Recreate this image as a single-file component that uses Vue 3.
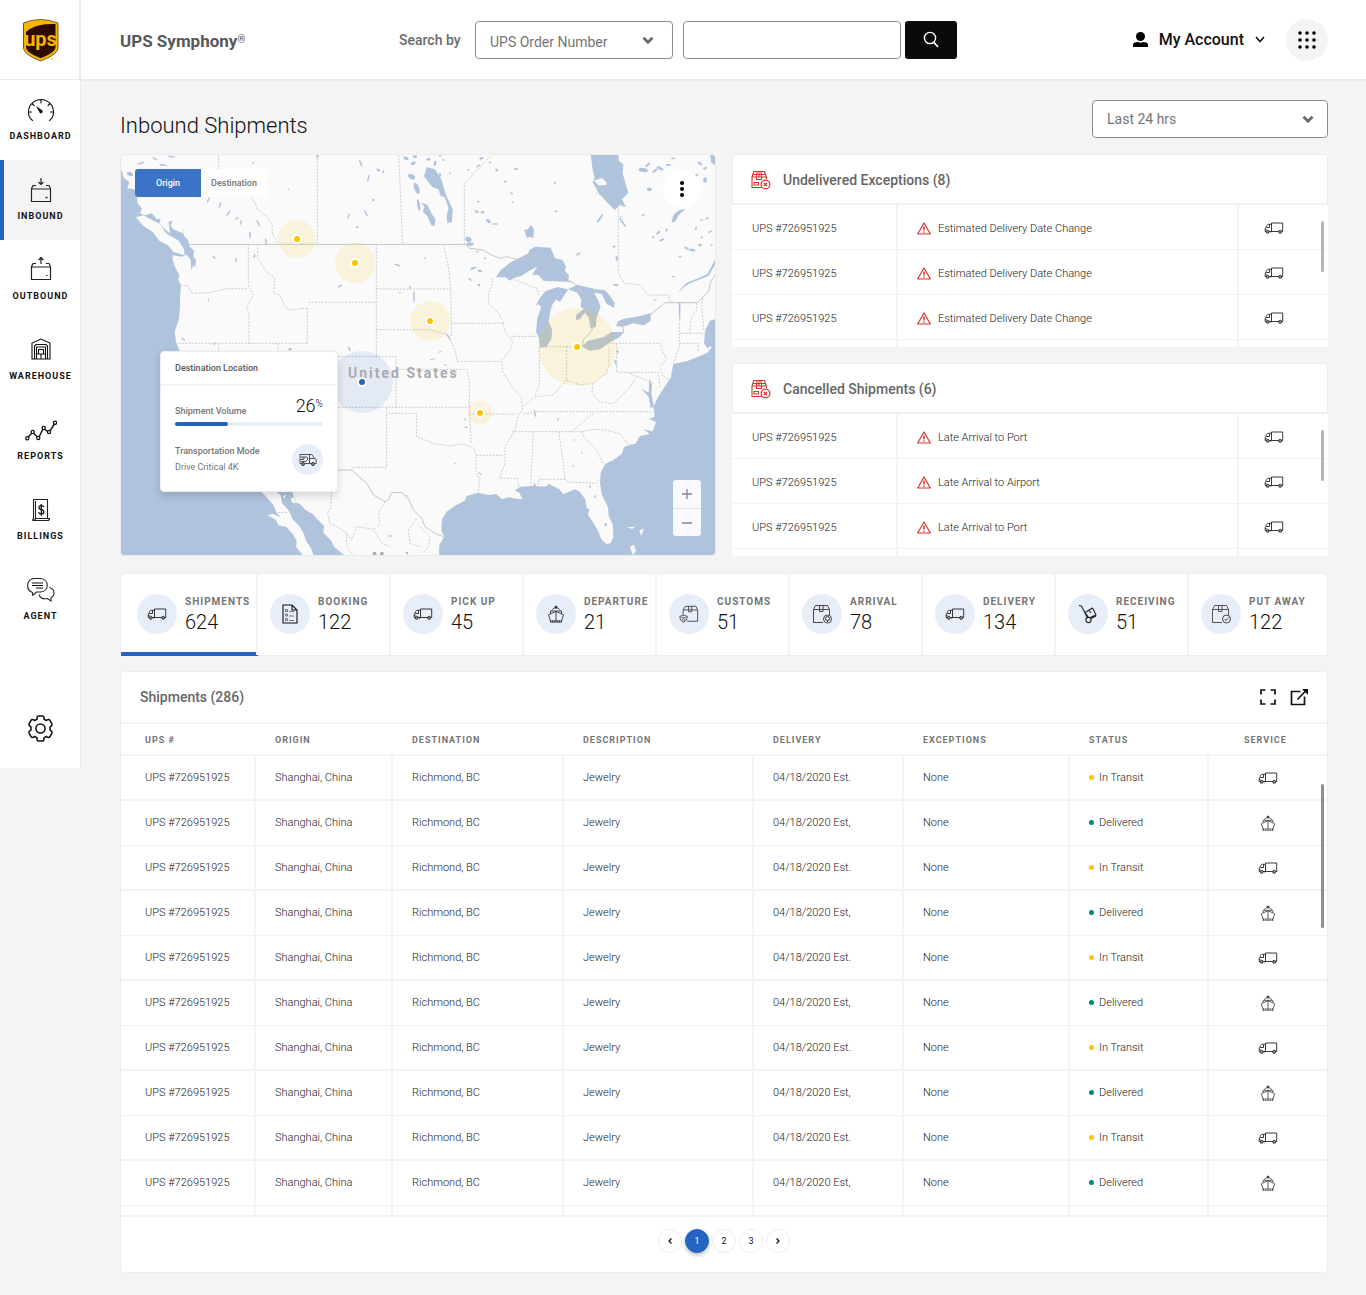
<script setup>
import { ref } from 'vue'

const nav = [
  { label: 'Dashboard', icon: 'gauge' },
  { label: 'Inbound', icon: 'inbound', active: true },
  { label: 'Outbound', icon: 'outbound' },
  { label: 'Warehouse', icon: 'warehouse' },
  { label: 'Reports', icon: 'reports' },
  { label: 'Billings', icon: 'billing' },
  { label: 'Agent', icon: 'agent' },
]

const alerts = [
  {
    title: 'Undelivered Exceptions (8)',
    rows: ['Estimated Delivery Date Change', 'Estimated Delivery Date Change', 'Estimated Delivery Date Change'],
  },
  {
    title: 'Cancelled Shipments (6)',
    rows: ['Late Arrival to Port', 'Late Arrival to Airport', 'Late Arrival to Port'],
  },
]

const stats = [
  { label: 'Shipments', value: 624, icon: 'truck', active: true },
  { label: 'Booking', value: 122, icon: 'doc' },
  { label: 'Pick up', value: 45, icon: 'truck' },
  { label: 'Departure', value: 21, icon: 'ship' },
  { label: 'Customs', value: 51, icon: 'customs' },
  { label: 'Arrival', value: 78, icon: 'arrival' },
  { label: 'Delivery', value: 134, icon: 'truck' },
  { label: 'Receiving', value: 51, icon: 'dolly' },
  { label: 'Put Away', value: 122, icon: 'putaway' },
]

const columns = ['UPS #', 'Origin', 'Destination', 'Description', 'Delivery', 'Exceptions', 'Status', 'Service']
const shipments = Array.from({ length: 10 }, (_, i) => ({
  id: 'UPS #726951925',
  transit: i % 2 === 0,
  date: i % 2 === 0 ? '04/18/2020 Est.' : '04/18/2020 Est,',
}))

const page = ref(1)
const searchBy = ref('order')
const period = ref('24')
const query = ref('')

// x, y, rx, ry, rotation
const ponds = [
  [30, 72, 12, 7, 20], [75, 115, 18, 4, 35], [62, 40, 14, 3, -20], [130, 45, 16, 3, 5], [105, 26, 10, 3, 30], [155, 20, 14, 3, 10],
  [240, 135, 3, 12, 30], [265, 150, 3, 12, 25], [300, 165, 3, 12, 20], [325, 190, 3, 14, 35], [350, 205, 8, 3, -30],
  [362, 218, 3, 9, 10], [390, 255, 3, 14, 0], [415, 220, 3, 14, -30], [438, 275, 3, 14, -10], [348, 330, 3, 9, 0],
  [403, 318, 3, 8, 10], [282, 322, 8, 3, 50], [265, 450, 2, 6, 0], [190, 568, 9, 3, 30], [510, 598, 6, 5, 0], [283, 582, 2, 7, 0],
  [400, 38, 6, 2, -30], [505, 118, 3, 3, 0], [592, 19, 5, 5, 0], [722, 40, 3, 14, -20], [745, 85, 3, 14, 10], [760, 150, 5, 5, 0],
  [738, 190, 3, 14, -30], [712, 232, 5, 4, 0], [686, 198, 3, 10, 20], [775, 60, 8, 4, 30], [790, 65, 3, 6, 0], [832, 345, 12, 3, 20],
  [660, 408, 10, 3, -25], [840, 428, 7, 2, 0], [882, 440, 3, 20, 0], [870, 412, 3, 6, 20], [688, 597, 3, 10, -20],
  [858, 25, 10, 6, 20], [880, 40, 9, 6, -20], [885, 20, 8, 5, 0], [875, 80, 14, 9, 30], [890, 115, 9, 22, -20], [896, 165, 5, 22, -10],
  [925, 28, 8, 5, 0], [945, 40, 5, 10, 20], [960, 75, 4, 8, 0], [990, 70, 4, 3, 0], [970, 30, 6, 3, 0],
  [1085, 25, 9, 4, -20], [1075, 48, 9, 3, -30], [1110, 38, 5, 3, 0], [1130, 60, 7, 4, 40], [1188, 57, 8, 4, 0], [1155, 95, 7, 3, -40],
  [1175, 130, 6, 3, 30], [1070, 185, 9, 4, 30], [1088, 187, 6, 5, 0], [1105, 213, 10, 6, 40], [1125, 222, 12, 3, 0], [1075, 155, 5, 3, 0],
  [1178, 156, 4, 3, 0], [1305, 98, 3, 5, 0], [1308, 184, 6, 3, 20], [1440, 205, 4, 20, 35], [1502, 205, 3, 8, 10], [1510, 220, 3, 18, -35],
  [1045, 268, 12, 9, 30], [1050, 282, 14, 7, 0], [1060, 355, 12, 4, -20], [1080, 363, 9, 4, 10], [1050, 388, 8, 3, 30], [1077, 405, 5, 5, 0],
  [1072, 305, 5, 3, 0], [1095, 325, 5, 3, 0], [1375, 312, 10, 3, -30], [1482, 290, 6, 4, 0], [1490, 325, 4, 10, 0], [1488, 405, 10, 4, 10],
  [1570, 60, 18, 8, 10], [1583, 45, 12, 4, -40], [1620, 55, 14, 5, 25], [1605, 62, 12, 4, -40], [1645, 45, 10, 4, 0], [1588, 118, 9, 7, 0],
  [1660, 25, 9, 3, 0], [1740, 40, 9, 5, 30], [1755, 55, 8, 4, -30], [1755, 90, 7, 10, 20], [1730, 75, 6, 4, 0], [1762, 205, 8, 3, -20],
  [1745, 210, 6, 3, 0], [1570, 195, 4, 5, 0], [1615, 248, 10, 4, -40], [1625, 270, 10, 4, -20], [1600, 262, 6, 3, 40], [1640, 240, 4, 7, 10],
  [1728, 235, 3, 7, 10], [1700, 295, 10, 4, 30], [1717, 300, 12, 5, 10], [1740, 285, 8, 4, -30], [1745, 262, 5, 3, 0], [1775, 285, 5, 3, 0],
  [1680, 320, 6, 3, 0], [1770, 245, 8, 3, -20], [1660, 380, 5, 3, 0], [1605, 450, 5, 2, 20], [1045, 60, 6, 3, 0], [960, 18, 6, 3, 0],
  [985, 560, 3, 16, -35], [915, 325, 4, 3, 0], [960, 605, 8, 2, -20], [938, 628, 12, 2, -15], [975, 645, 7, 2, 20],
  [1245, 790, 3, 14, -10], [1314, 808, 3, 6, 0], [1038, 832, 6, 3, 0], [1035, 808, 3, 4, 0], [1363, 870, 3, 3, 0], [1385, 908, 3, 3, 0],
  [1005, 940, 2, 5, 0], [1360, 948, 2, 6, 20], [1080, 970, 2, 9, -40], [1410, 1010, 3, 6, 0], [1425, 1040, 3, 6, 0], [1457, 1124, 5, 6, 0],
  [1487, 638, 3, 14, -20], [1493, 605, 3, 8, 0], [810, 1158, 8, 3, 0], [860, 1037, 4, 2, 0],
]

const pins = [
  { x: 176, y: 84, r: 19 },
  { x: 234, y: 108, r: 20 },
  { x: 309, y: 166, r: 20 },
  { x: 456, y: 192, r: 39 },
  { x: 359, y: 258, r: 12 },
]
</script>

<template>
  <svg class="sprite" aria-hidden="true">
    <symbol id="gauge" viewBox="0 -1 30 26">
      <path d="M6.500 22.500C3.500 20.500 2.500 17 2.500 14A12.500 12.500 0 0 1 27.500 14C27.500 17 26.500 20.500 23.500 22.500M15 2V5M6 5.500L8 7.500M24 5.500L22 7.500M2.500 14H5.500M24.500 14H27.500" fill="none" stroke="#111" stroke-width="1.100" stroke-linecap="round" />
      <path d="M10 8L16.500 12.500A2 2 0 0 1 14 15.200Z" fill="#111" />
    </symbol>
    <symbol id="inbound" viewBox="0 0 22 26">
      <path d="M1.500 12V24.500H20.500V12ZM1.500 11.500L3 8.500H6M20.500 11.500L19 8.500H16M11 1V7M8.500 5L11 7.500L13.500 5" fill="none" stroke="#222" stroke-width="1.200" />
      <path d="M15.500 20.500H17.500" stroke="#222" stroke-width="1.500" />
    </symbol>
    <symbol id="outbound" viewBox="0 2 22 26">
      <path d="M1.500 12V24.500H20.500V12ZM1.500 11.500L3 8.500H6M20.500 11.500L19 8.500H16M11 9V3M8.500 5L11 2.500L13.500 5" fill="none" stroke="#222" stroke-width="1.200" />
      <path d="M16 20.500H17.500" stroke="#222" stroke-width="1.200" />
    </symbol>
    <symbol id="warehouse" viewBox="-6 -1 32 26">
      <path d="M1 21V5L10 1L19 5V21ZM3.500 21V8L5 6.500H15L16.500 8V21M5.500 21V9H14.500V21M7.500 16V11.500H12.500V16M5.500 21V16H14.500M10 16V21" fill="none" stroke="#111" stroke-width="1.100" />
    </symbol>
    <symbol id="reports" viewBox="0 -3 32 26">
      <path d="M3.300 17L6.700 13.300M8.800 13.400L12.200 16.800M14.200 16.700L17.800 9.300M20 9.500L23 11.600M25 10.800L29.400 4" fill="none" stroke="#111" stroke-width="1.400" />
      <g fill="none" stroke="#111" stroke-width="1.300">
        <circle cx="2.300" cy="18.300" r="1.600" /><circle cx="7.700" cy="12" r="1.600" /><circle cx="13.300" cy="18" r="1.600" />
        <circle cx="18.700" cy="8" r="1.600" /><circle cx="24" cy="12" r="1.600" /><circle cx="30" cy="2.700" r="1.600" />
      </g>
    </symbol>
    <symbol id="billing" viewBox="-6 -1 32 26">
      <path d="M2.500 20V1.500H16.500V20M4.500 3V20M1.500 22.500C3.500 22.500 4.500 21.500 4.500 20.500H18.500C18.500 22 17.500 22.500 16.500 22.500ZM1.500 22.500L2.500 20" fill="none" stroke="#222" stroke-width="1.100" />
      <path d="M13 9C12.500 7.800 11.500 7.600 10.300 7.600C7 7.600 7.200 11.300 10.300 11.700C13.700 12.200 13.500 16 10.300 16C8.800 16 7.800 15.300 7.500 14.200M10.300 6V17.700" fill="none" stroke="#111" stroke-width="1.300" />
    </symbol>
    <symbol id="agent" viewBox="0 0 30 26">
      <path d="M6.500 18.500V15.500C-.5 13 0 2 8.500 1.500H14.500C23.500 2 23.500 14.500 14.500 15H10.500L6.500 18.500M23.500 10.500C29.500 12.500 29 18.500 25 20.500V24L21.500 21.500C17 22.500 14 20.500 13 17.500" fill="none" stroke="#222" stroke-width="1.100" />
      <path d="M6 6H17M6 8.500H17M10 11H17" stroke="#111" stroke-width="1.100" />
    </symbol>
    <symbol id="gear" viewBox="0 0 26 26">
      <path d="M9.700 4V2.500Q9.700 1 11 1H15Q16.300 1 16.300 2.500V4L18.500 5.300L20 4.500Q21.300 4 22 5L24 8.500Q24.600 9.800 23.500 10.500L22.200 11.500V14.500L23.500 15.500Q24.600 16.200 24 17.500L22 21Q21.300 22 20 21.500L18.500 20.700L16.300 22V23.500Q16.300 25 15 25H11Q9.700 25 9.700 23.500V22L7.500 20.700L6 21.500Q4.700 22 4 21L2 17.500Q1.400 16.200 2.500 15.500L3.800 14.500V11.500L2.500 10.500Q1.400 9.800 2 8.500L4 5Q4.700 4 6 4.500L7.500 5.300Z" fill="none" stroke="#111" stroke-width="1.500" />
      <circle cx="13" cy="13" r="4.400" fill="none" stroke="#111" stroke-width="1.500" />
    </symbol>
    <symbol id="truck" viewBox="0 0 20 12">
      <path d="M7.500 1H18.700V9.500H7.500ZM7.500 2.300H4.300C2.800 2.500 2.300 4 2 5.500L1.200 6.200V9.500H7.500M5.500 2.500V5.500H2.200M1.300 7.500H2.500" fill="none" stroke="#222" stroke-width=".9" />
      <circle cx="3.700" cy="9.800" r="1.500" fill="#999" stroke="#222" stroke-width=".9" /><circle cx="16.200" cy="9.800" r="1.500" fill="#999" stroke="#222" stroke-width=".9" /><circle cx="6.800" cy="9.800" r=".8" fill="#222" />
    </symbol>
    <symbol id="ambulance" viewBox="0 0 18 13">
      <path d="M10.500 1.500V10.500M1 1.500H13L15.500 5.500L17.200 6.500V10.500H1ZM10.500 5.500H15.500M2 4H8L9 6L7 8M1 6.500H5M3 5H6M2 8.500H7" fill="none" stroke="#444" stroke-width=".9" />
      <circle cx="4" cy="11" r="1.500" fill="#999" stroke="#333" /><circle cx="14" cy="11" r="1.500" fill="#999" stroke="#333" />
    </symbol>
    <symbol id="ship" viewBox="0 0 18 20">
      <path d="M3.500 17L1.500 11L3.500 9.800V7H14.500V9.800L16.500 11L14.500 17M5 6.500C5.500 4.800 6.500 4.300 7.500 4.200H10.500C11.500 4.300 12.500 4.800 13 6.500M9 1.500V4M3.500 9.800L9 7.500L14.500 9.800M9 7.500V17" fill="none" stroke="#333" stroke-width=".9" />
      <path d="M3 16.800H15M3 18.200H15" stroke="#333" stroke-width="1.200" stroke-dasharray="1.500 .6" /><path d="M7.500 2.300H10.500V4H7.500Z" fill="#333" />
    </symbol>
    <symbol id="doc" viewBox="0 0 16 20">
      <path d="M1 1H10L15 6V19H1ZM10 1V6H15" fill="none" stroke="#111" stroke-width="1.100" />
      <path d="M3.500 5.500H5.500V7.500H3.500ZM3.500 10H5.500V12H3.500ZM3.500 14.500H5.500V16.500H3.500ZM7 7.500H12M7 12H12M7 16.500H12" fill="none" stroke="#555" stroke-width=".8" />
    </symbol>
    <symbol id="customs" viewBox="0 0 22 20">
      <path d="M4.500 11V5.500H20.500V18H9M4.500 5.500L7 1.500H18.500L20.500 5.500M10.500 1.500V7.500H14V1.500" fill="none" stroke="#444" stroke-width="1" />
      <path d="M1 12.500L5 11.500L9 12.500C9.200 16 7.500 18 5 19C2.500 18 .8 16 1 12.500ZM2.500 14.200H7.500M3.500 16.500H7" fill="#e7eef9" stroke="#444" stroke-width="1" />
    </symbol>
    <symbol id="arrival" viewBox="0 0 20 20">
      <path d="M11 18.500H1.500V5.500H17.500V11M1.500 5.500L3.500 1.500H15.500L17.500 5.500M7.500 1.500V7.500H11V1.500" fill="none" stroke="#444" stroke-width="1" />
      <circle cx="15.500" cy="15" r="4" fill="#e7eef9" stroke="#444" /><circle cx="15.500" cy="14.500" r="2" fill="none" stroke="#333" stroke-width="1" /><path d="M15.500 16V18" stroke="#444" />
    </symbol>
    <symbol id="putaway" viewBox="0 0 20 20">
      <path d="M11 18.500H1.500V5.500H17.500V11M1.500 5.500L3.500 1.500H15.500L17.500 5.500M7.500 1.500V7.500H11V1.500" fill="none" stroke="#444" stroke-width=".9" />
      <circle cx="15.500" cy="15" r="4" fill="#e7eef9" stroke="#444" /><path d="M13.500 15L15 16.500L17.500 13.500" fill="none" stroke="#444" />
    </symbol>
    <symbol id="dolly" viewBox="0 0 20 20">
      <path d="M1 1.500L3.500 2L9.500 14M7 8.500L14.500 4L18 11L11 14ZM11 6.500L13 9M12 15L18 12" fill="none" stroke="#222" stroke-width="1.100" stroke-linejoin="round" />
      <circle cx="10.500" cy="16" r="2.600" fill="#e7eef9" stroke="#222" stroke-width="1.100" />
    </symbol>
    <symbol id="badbox" viewBox="0 0 20 20">
      <path d="M10.500 17.500H1V7L2.700 1.500H13.300L15.500 7V9M1 7H15.500M6 1.500L5.500 7V9.500H10.500V7L10 1.500M8 1.500V7M2 4.500H14.500M3 12.500H7.500V15H3Z" fill="none" stroke="#d9332e" stroke-width="1.100" />
      <circle cx="14.500" cy="14.500" r="4.400" fill="#fff" stroke="#d9332e" stroke-width="1.200" /><path d="M13 13L16 16M16 13L13 16" stroke="#d9332e" stroke-width="1.200" />
    </symbol>
    <symbol id="warn" viewBox="0 0 14 13">
      <path d="M7 1L13.300 12H.7Z" fill="none" stroke="#d9332e" stroke-width="1.200" stroke-linejoin="round" />
      <path d="M7 4.500V8.500M7 9.500V10.700" stroke="#d9332e" stroke-width="1.500" />
    </symbol>
  </svg>

  <div class="app">
    <header class="topbar">
      <a class="logo" href="#" aria-label="UPS home">
        <svg width="36" height="43" viewBox="0 0 36 43">
          <path d="M.5 4Q17.500-3 35 4V28C35 33 31 36.500 17.800 42C4 36.500 .5 33 .5 28Z" fill="#f7b600" stroke="#5c3410" stroke-width=".8" />
          <path d="M3 13Q12 4 32.500 5V27.500C32.500 32 28 35 17.800 39.200C7 35 3 32 3 27.500Z" fill="#2d0a00" />
          <text class="logo-text" x="17.500" y="27" text-anchor="middle">ups</text>
          <circle cx="29" cy="40" r="1.200" fill="#fbdc85" />
        </svg>
      </a>
      <div class="brand">UPS Symphony<sup>®</sup></div>
      <form class="search" @submit.prevent>
        <label for="search-by">Search by</label>
        <span class="select-box order-select">
          <select id="search-by" v-model="searchBy"><option value="order">UPS Order Number</option></select>
          <svg class="chev" width="12" height="9" viewBox="0 0 12 9"><path d="M1.500 1.800L6 6.300L10.500 1.800" fill="none" stroke="#6b6b6b" stroke-width="2.800" /></svg>
        </span>
        <input v-model="query" type="text" aria-label="Search term" />
        <button class="go" type="submit" aria-label="Search">
          <svg width="16" height="18" viewBox="0 0 16 18"><circle cx="7" cy="7" r="5.600" fill="none" stroke="#fff" stroke-width="1.400" /><path d="M11 11.500L15 16" stroke="#fff" stroke-width="1.800" /></svg>
        </button>
      </form>
      <button class="account" type="button">
        <svg width="15" height="15" viewBox="0 0 15 15"><circle cx="7.500" cy="4.500" r="4.500" /><path d="M0 15V13Q0 10.500 3 10.300L5 10Q7.500 11.500 10 10L12 10.300Q15 10.500 15 13V15Z" /></svg>
        My Account
        <svg width="10" height="7" viewBox="0 0 10 7"><path d="M1 1L5 5.500L9 1" fill="none" stroke="#111" stroke-width="1.500" /></svg>
      </button>
      <button class="apps" type="button" aria-label="Apps">
        <svg width="18" height="18" viewBox="0 0 18 18"><g v-for="r in 3" :key="r"><circle v-for="c in 3" :key="c" :cx="c * 7 - 5" :cy="r * 7 - 5" r="1.800" /></g></svg>
      </button>
    </header>

    <div class="body">
      <nav class="side">
        <a v-for="n in nav" :key="n.label" href="#" :class="{ active: n.active }">
          <svg width="32" height="26"><use :href="'#' + n.icon" /></svg>
          <span>{{ n.label }}</span>
        </a>
        <a class="settings" href="#" aria-label="Settings"><svg width="27" height="27"><use href="#gear" /></svg></a>
      </nav>

      <main>
        <div class="head">
          <h1>Inbound Shipments</h1>
          <span class="select-box period">
            <select v-model="period" aria-label="Period"><option value="24">Last 24 hrs</option></select>
            <svg class="chev" width="12" height="9" viewBox="0 0 12 9"><path d="M1.500 1.800L6 6.300L10.500 1.800" fill="none" stroke="#6b6b6b" stroke-width="2.800" /></svg>
          </span>
        </div>

        <div class="overview">
          <section class="map" aria-label="Shipment map">
            <svg class="geo" viewBox="0 0 594 400" preserveAspectRatio="xMidYMid slice">
              <g transform="scale(.33333) translate(-3 -15)">
                <g fill="#afc3dd">
                  <path d="M3 55L12 85L28 95L22 115L42 118L52 128V158L66 176L60 190L75 196L95 190L110 208L122 206L118 220L135 238L150 250L148 230L145 215L158 212L152 226L160 238L188 250L186 232L192 258L204 270L208 288L222 302L220 322L228 328L226 352L220 345L214 362L212 330L200 314L186 320L158 316L158 330L165 350L178 375L175 390L183 405L180 440L180 470L176 510L164 545L168 575L178 600L190 700L260 850L360 1000L425 1027L440 1042L460 1065L470 1088L482 1102L458 1092L443 1096L468 1110L475 1126L498 1130L518 1152L530 1172L528 1190L548 1215H3Z" />
                  <path d="M463 1020L482 1036L486 1060L508 1084L518 1108L538 1128L552 1152L558 1172L574 1196L580 1215H672L642 1190L634 1172L610 1148L612 1128L592 1108L578 1092L556 1080L540 1062L528 1058L515 1020Z" />
                  <path d="M957 1215L958 1185L972 1160L964 1140L966 1108L980 1085L1004 1068L1034 1052L1040 1038L1075 1028L1105 1035L1128 1032L1146 1048L1165 1042L1190 1046L1207 1048L1198 1028L1184 1022L1200 1010L1240 1008L1244 998L1248 1008L1278 1010L1286 1002L1318 1018L1330 1033L1364 1018L1380 1026L1396 1048L1400 1074L1408 1078L1404 1094L1420 1118L1434 1142L1444 1168L1458 1182L1472 1180L1480 1160L1478 1122L1466 1098L1464 1072L1446 1036L1440 1000L1442 968L1456 942L1480 930L1505 912L1512 892L1528 884L1546 882L1560 858L1590 852L1570 838L1598 844L1608 816L1588 806L1604 800L1600 770L1614 742L1630 716L1652 684L1660 642L1700 634L1740 618L1762 608L1776 592L1768 588L1764 596L1752 580L1756 540L1770 512L1785 508V1215Z" />
                  <path d="M1128 382L1140 362L1170 338L1225 310L1228 300L1245 290L1292 293L1305 325L1328 330L1338 350L1334 362L1347 376L1345 392L1362 397L1340 395L1300 394L1270 392L1255 375L1236 374L1252 350L1228 362L1204 378L1180 384L1170 392L1155 382Z" />
                  <path d="M1246 470L1258 446L1276 424L1312 411L1345 418L1330 440L1320 456L1308 448L1298 462L1292 480L1286 515L1297 540L1294 568L1278 592L1260 592L1256 560L1248 545L1252 505L1264 470L1254 462Z" />
                  <path d="M1344 418L1372 428L1384 448L1382 470L1392 476L1368 496L1368 510L1380 508L1394 488L1406 502L1412 536L1428 530L1430 502L1442 470L1434 450L1422 428L1446 432L1458 460L1482 474L1484 458L1468 436L1454 420L1428 418L1370 404L1360 410Z" />
                  <path d="M1386 590L1404 572L1450 562L1474 546L1512 546L1500 560L1468 578L1440 598L1410 602Z" />
                  <path d="M1488 528L1494 514L1512 506L1550 500L1592 490L1592 512L1572 526L1540 520L1508 530Z" />
                  <path d="M1412 15L1418 60L1424 84L1418 96L1435 128L1462 158L1485 180L1500 164L1518 172L1506 148L1525 128L1515 95L1508 70L1510 42L1497 34L1495 15Z" />
                  <path d="M920 52L945 58L964 88L978 135L998 178L996 215L982 220L980 196L986 174L974 142L962 138L955 118L938 112L922 92L912 78Z" />
                  <path d="M904 158L922 164L934 190L946 208L944 228L934 226L922 198L908 184L914 172Z" />
                  <path d="M1213 240L1224 238L1232 224L1242 236L1240 264L1230 260L1220 264Z" />
                  <path d="M1672 428L1700 398L1736 384L1762 372L1785 330V345L1765 378L1740 388L1705 402Z" />
                  <path d="M1654 218L1660 196L1674 182L1696 176L1676 196L1666 214Z" />
                  <path d="M1588 684L1596 706L1594 730L1602 770L1592 774L1586 740L1564 716L1586 728Z" />
                  <path d="M1676 457L1682 458L1680 520L1677 500Z" /><path d="M1770 15H1785V46L1774 38Z" />
                  <ellipse v-for="(p, i) in ponds" :key="i" :cx="p[0]" :cy="p[1]" :rx="p[2] * 0.8" :ry="p[3] * 0.8" :transform="`rotate(${p[4]} ${p[0]} ${p[1]})`" />
                </g>
                <g fill="#fafafa">
                  <path d="M48 202L70 196L92 208L120 222L138 250L176 272L192 298L194 316L160 306L146 288L118 272L98 246L68 226Z" />
                  <path d="M1422 92L1446 84L1460 98L1458 106L1436 106Z" />
                  <path d="M1662 628L1690 616L1750 610L1712 622L1668 636Z" />
                  <path d="M1520 1132L1545 1130L1538 1137ZM1558 1142L1572 1134L1564 1158ZM1530 1190L1542 1184L1548 1204L1538 1215Z" />
                  <path d="M512 1048L520 1040L528 1058L518 1060ZM488 1038L498 1034L494 1046Z" />
                </g>
                <g fill="none" stroke="#cacbcd" stroke-width="3" stroke-dasharray="6 4">
                  <path d="M296 15V60L350 110L400 150L415 180L440 200L455 220L458 255L474 280M592 15V283M836 15L848 283M385 283V405L400 435L380 475L387 495V578M180 405L205 408L215 430L270 428L320 416H385M413 283V325L440 365L465 385L460 430L480 435L495 470L510 480L562 474M562 474V580M565 457H768M769 283V618M175 580H562M296 580V605M474 580V605M769 417H992M769 539H930L985 555L1005 600L1012 635M655 620H828V658M828 658H1040L1048 690V772M828 658V772M655 772H1048M800 772V952H690M805 790H890V860L940 880L985 888L1030 882L1062 895L1068 915V960L1080 990L1074 1028M1048 772V790L1054 880M1048 792H1185M1068 916H1150" />
                  <path d="M970 283L985 350L992 417L994 520V560M994 520H1150L1155 545L1180 575L1170 600L1145 630L1148 665L1180 715L1205 745L1208 780L1195 795L1185 840L1155 890L1155 940L1138 985H1192L1196 1010M1012 634H1140M1150 520L1140 495L1105 460V430L1118 400L1115 385M1174 559H1256M1180 388L1250 415L1258 440M1258 590V700L1245 740L1210 770M1258 590H1380M1340 590V690L1300 735L1245 740M1340 690L1380 705L1420 700L1460 670L1467 640V590M1467 580H1620L1630 610L1640 625L1620 650L1630 680L1650 690M1490 580V667H1615L1620 710M1530 670L1600 700M1420 700L1415 730L1440 755L1480 762L1530 710L1550 680M1210 790H1240L1245 785H1600M1175 845H1385L1420 838L1460 840L1500 852L1530 888M1385 845L1395 865L1430 900L1452 945M1240 845L1232 1008M1316 845L1330 940L1335 990L1344 996L1430 1000L1436 990M1335 988L1256 988V1008M1355 845L1420 790" />
                  <path d="M1033 283V100L1115 15M1495 165V370L1515 400L1560 405L1585 435L1645 435L1652 457M1428 130L1490 155M1680 550H1755M1680 580H1735V605M1708 550L1715 500L1730 480V457M1748 445L1745 470L1752 540M1678 520V590L1660 640M635 1025L632 1075L622 1090L630 1120L660 1135L680 1150L695 1170L710 1130L760 1138L785 1180L810 1190M795 1055L775 1090L780 1125L760 1138M890 1105L865 1140L870 1180L900 1190M900 1130L930 1160L925 1190L910 1210M680 1150V1190L700 1215M475 1088L508 1086" />
                </g>
                <g fill="none" stroke="#c2c5c9" stroke-width="3">
                  <path d="M205 283H1035L1050 295L1090 300L1115 315L1140 325L1160 320L1190 328L1235 315L1340 378L1345 392L1362 400L1382 420L1405 445L1412 500L1417 540L1390 570L1387 588L1410 595L1450 570L1512 545L1506 520L1575 514L1590 495L1635 458H1732L1750 440L1765 425L1772 395L1785 375" />
                  <path d="M652 960H695L740 1000L760 1035L795 1055L805 1050L815 1028L845 1027L865 1045L880 1080L905 1105L915 1130L945 1150L970 1160" />
                </g>
              </g>
              <circle cx="241" cy="227" r="31" fill="#2a66c4" fill-opacity=".1" />
              <text class="country" x="227" y="223">United States</text>
              <text class="country" x="251" y="408">Mexico</text>
              <g v-for="(p, i) in pins" :key="i">
                <circle :cx="p.x" :cy="p.y" :r="p.r" fill="#ffc400" fill-opacity=".12" />
                <circle :cx="p.x" :cy="p.y" r="4" fill="#ffc400" stroke="#fff" stroke-width="2" />
              </g>
              <circle cx="241" cy="227" r="4" fill="#2464c2" stroke="#fff" stroke-width="2" />
            </svg>

            <div class="toggle">
              <button class="on" type="button">Origin</button>
              <button type="button">Destination</button>
            </div>
            <button class="more" type="button" aria-label="Map options"><i></i><i></i><i></i></button>
            <div class="zoom">
              <button type="button" aria-label="Zoom in"><svg width="10" height="10" viewBox="0 0 10 10"><path d="M0 5H10M5 0V10" stroke="#858585" stroke-width="1.300" /></svg></button>
              <button type="button" aria-label="Zoom out"><svg width="10" height="10" viewBox="0 0 10 10"><path d="M0 5H10" stroke="#858585" stroke-width="1.300" /></svg></button>
            </div>
            <div class="tip">
              <h3>Destination Location</h3>
              <div class="tip-body">
                <div class="line"><span>Shipment Volume</span><b class="pct">26<sup>%</sup></b></div>
                <div class="bar"><div :style="{ width: '36%' }"></div></div>
                <div class="line mode">
                  <div><span>Transportation Mode</span><small>Drive Critical 4K</small></div>
                  <span class="round"><svg width="18" height="13"><use href="#ambulance" /></svg></span>
                </div>
              </div>
            </div>
          </section>

          <div class="alerts">
            <section v-for="a in alerts" :key="a.title" class="alert">
              <h2><svg width="20" height="20"><use href="#badbox" /></svg>{{ a.title }}</h2>
              <div class="scroll">
                <table>
                  <colgroup><col class="a1" /><col class="a2" /><col /></colgroup>
                  <tbody>
                    <tr v-for="(r, i) in a.rows" :key="i">
                      <td>UPS #726951925</td>
                      <td><span class="why"><svg width="14" height="13"><use href="#warn" /></svg>{{ r }}</span></td>
                      <td class="svc"><svg width="20" height="12"><use href="#truck" /></svg></td>
                    </tr>
                    <tr><td></td><td></td><td></td></tr>
                  </tbody>
                </table>
                <span class="thumb"></span>
              </div>
            </section>
          </div>
        </div>

        <div class="stats">
          <button v-for="s in stats" :key="s.label" type="button" :class="{ active: s.active }">
            <span class="disc"><svg width="20" height="20"><use :href="'#' + s.icon" /></svg></span>
            <span class="fig"><em>{{ s.label }}</em><strong>{{ s.value }}</strong></span>
          </button>
        </div>

        <section class="shipments">
          <div class="bar-head">
            <h2>Shipments (286)</h2>
            <button type="button" aria-label="Full screen"><svg width="16" height="16" viewBox="0 0 16 16"><path d="M1 5.500V1H5.500M10.500 1H15V5.500M15 10.500V15H10.500M5.500 15H1V10.500" fill="none" stroke="#111" stroke-width="1.700" /></svg></button>
            <button type="button" aria-label="Open in new window"><svg width="19" height="18" viewBox="0 0 19 18"><path d="M10.500 3.500H1.500V16.500H14.500V8.500M7.500 11.500L16.500 2" fill="none" stroke="#111" stroke-width="1.700" /><path d="M12 1H18V7L16 5L13.500 2.500Z" fill="#111" /></svg></button>
          </div>
          <div class="scroll grid">
            <table>
              <colgroup><col v-for="n in 8" :key="n" :class="'c' + n" /></colgroup>
              <thead><tr><th v-for="c in columns" :key="c" scope="col">{{ c }}</th></tr></thead>
              <tbody>
                <tr v-for="(s, i) in shipments" :key="i">
                  <td>{{ s.id }}</td>
                  <td>Shanghai, China</td>
                  <td>Richmond, BC</td>
                  <td>Jewelry</td>
                  <td>{{ s.date }}</td>
                  <td>None</td>
                  <td><span class="state" :class="{ transit: s.transit }">{{ s.transit ? 'In Transit' : 'Delivered' }}</span></td>
                  <td><svg v-if="s.transit" width="20" height="12"><use href="#truck" /></svg><svg v-else class="vessel" width="16" height="18"><use href="#ship" /></svg></td>
                </tr>
                <tr><td v-for="n in 8" :key="n"></td></tr>
              </tbody>
            </table>
            <span class="thumb"></span>
          </div>
          <div class="pager">
            <button type="button" aria-label="Previous page"><svg width="6" height="8" viewBox="0 0 6 8"><path d="M4.500 1.500L2 4L4.500 6.500" fill="none" stroke="#111" stroke-width="1.300" /></svg></button>
            <button v-for="n in 3" :key="n" type="button" :class="{ on: n === page }" @click="page = n">{{ n }}</button>
            <button type="button" aria-label="Next page"><svg width="6" height="8" viewBox="0 0 6 8"><path d="M1.500 1.500L4 4L1.500 6.500" fill="none" stroke="#111" stroke-width="1.300" /></svg></button>
          </div>
        </section>
      </main>
    </div>
  </div>
</template>

<style>
body { background: #f4f4f4; }
</style>

<style scoped>
* { box-sizing: border-box; }
.sprite { position: absolute; width: 0; height: 0; }
.app { font-family: Roboto, "Liberation Sans", sans-serif; color: #333; }
button { font: inherit; color: inherit; border: 0; background: none; padding: 0; cursor: pointer; }
a { color: inherit; text-decoration: none; }
h1, h2, h3 { margin: 0; }
table { width: 100%; border-collapse: separate; border-spacing: 0; table-layout: fixed; }
svg { display: block; flex: none; }

.topbar { display: flex; align-items: center; height: 81px; background: #fff; border-bottom: 2px solid #ebebeb; padding-right: 38px; }
.logo { width: 81px; height: 81px; padding: 19px 0 0 23px; border-right: 2px solid #ebebeb; align-self: flex-start; flex: none; }
.logo-text { font: 700 20px "Liberation Sans Narrow", Roboto, sans-serif; fill: #f7b600; }
.brand { width: 318px; padding: 2px 0 0 39px; font-size: 17px; font-weight: 700; color: #58585a; line-height: 20px; }
.brand sup { font-size: 10px; line-height: 0; font-weight: 500; vertical-align: 4px; }
.search { display: flex; align-items: center; }
.search label { width: 76px; font-size: 14px; color: #6b6b6b; font-weight: 500; }
.select-box { position: relative; display: block; }
.select-box .chev { position: absolute; right: 19px; top: 15px; pointer-events: none; }
select, input { height: 38px; width: 100%; border: 1px solid #8c8c8c; border-radius: 4px; background: #fff; font: 400 14px Roboto, sans-serif; color: #757575; padding: 0 14px; appearance: none; }
.order-select { width: 198px; }
.order-select select { padding-top: 4px; }
.search input { width: 218px; margin: 0 4px 0 10px; }
.go { width: 52px; height: 38px; border-radius: 3px; background: #0a0a0a; display: grid; place-items: center; }
.account { margin-left: auto; display: flex; align-items: center; gap: 11px; font-size: 16px; font-weight: 500; color: #111; }
.apps { width: 42px; height: 42px; border-radius: 50%; background: #f4f4f4; display: grid; place-items: center; margin-left: 21px; }

.body { display: flex; align-items: flex-start; }
.side { width: 81px; flex: none; display: flex; flex-direction: column; background: #fff; border-right: 1px solid #ebebeb; margin-top: -1px; padding-bottom: 25px; }
.side a { height: 80px; display: flex; flex-direction: column; align-items: center; padding-top: 17px; gap: 7px; font-size: 9px; line-height: 12px; font-weight: 700; letter-spacing: 1px; text-transform: uppercase; color: #111; border-left: 4px solid transparent; padding-right: 3px; }
.side a.active { background: #f4f4f4; border-color: #2464c2; }
.side .settings { height: 41px; margin-top: 62px; padding-top: 13px; }

main { flex: 1; min-width: 0; padding: 19px 38px 22px 39px; }
.head { display: flex; justify-content: space-between; align-items: flex-start; height: 54px; }
h1 { font-size: 22px; line-height: 26px; font-weight: 300; color: #111; padding-top: 13px; }
.period { width: 236px; }
.period .chev { right: 14px; }

.overview { display: grid; grid-template-columns: 1fr 1fr; gap: 16px; }
.map { position: relative; height: 402px; border: 1px solid #ebebeb; border-radius: 4px; overflow: hidden; background: #fafafa; }
.geo { width: 100%; height: 100%; }
.country { font: 700 14px Roboto, sans-serif; letter-spacing: 2px; fill: #a9abae; }
.toggle { position: absolute; left: 14px; top: 14px; display: flex; height: 28px; border-radius: 3px; overflow: hidden; background: rgba(255, 255, 255, .8); font-size: 9px; font-weight: 500; color: #757575; }
.toggle button { width: 66px; }
.toggle .on { background: #3b74c7; color: #fff; }
.more { position: absolute; right: 14px; top: 15px; width: 38px; height: 38px; border-radius: 50%; background: #fff; display: flex; flex-direction: column; align-items: center; justify-content: center; gap: 2px; }
.more i { width: 4px; height: 4px; border-radius: 50%; background: #000; }
.zoom { position: absolute; right: 14px; bottom: 19px; width: 28px; border-radius: 3px; background: #f8faff; }
.zoom button { width: 28px; height: 28px; display: grid; place-items: center; }
.zoom button + button { border-top: 1px solid #e4e4e4; }
.tip { position: absolute; left: 39px; top: 196px; width: 178px; height: 141px; background: #fff; border: 1px solid #ededed; border-radius: 4px; box-shadow: 0 4px 8px rgba(0, 0, 0, .15); font-size: 9px; line-height: 12px; color: #757575; font-weight: 500; }
.tip h3 { height: 34px; padding: 10px 14px 0; font-size: 9px; font-weight: 500; line-height: 12px; color: #58585a; border-bottom: 2px solid #f4f4f4; }
.tip-body { padding: 7px 14px 0; }
.line { display: flex; justify-content: space-between; align-items: flex-end; }
.pct { font-size: 18px; line-height: 26px; font-weight: 300; color: #111; height: 29px; }
.pct sup { font-size: 10px; line-height: 0; vertical-align: 5px; }
.line > span:first-child { padding-bottom: 5px; }
.bar { height: 4px; border-radius: 2px; background: #e7eef9; }
.bar div { height: 4px; border-radius: 2px; background: #2464c2; }
.mode { margin-top: 18px; align-items: center; }
.mode > div { padding-bottom: 2px; }
.mode small { display: block; margin-top: 4px; font-size: 9px; font-weight: 400; }
.line .round { width: 31px; height: 31px; border-radius: 50%; background: #e7eef9; display: grid; place-items: center; padding: 0; }

.alerts { display: grid; grid-template-rows: 1fr 1fr; gap: 16px; height: 402px; }
.alert { display: flex; flex-direction: column; min-height: 0; background: #fff; border-radius: 4px 4px 0 0; }
.alert h2 { height: 51px; flex: none; display: flex; align-items: center; gap: 12px; padding: 2px 18px 0; border: 1px solid #ebebeb; border-bottom: 2px solid #f0f0f0; border-radius: 4px 4px 0 0; }
h2 { font-size: 14px; font-weight: 500; color: #666; }
.scroll { position: relative; overflow: hidden; flex: 1; }
td { height: 45px; padding: 0 0 0 19px; font-size: 11px; font-weight: 300; color: #222; border-bottom: 1px solid #f2f2f2; border-right: 2px solid #f4f4f4; vertical-align: middle; }
td:last-child { border-right: 0; }
.alert td { padding-top: 2px; }
.alert td:first-child { padding-left: 20px; }
.a1 { width: 166px; }
.a2 { width: 341px; }
.why { display: flex; align-items: center; gap: 7px; }
.alert .svc { padding-left: 25px; }
.thumb { position: absolute; right: 4px; top: 16px; width: 3px; height: 51px; border-radius: 2px; background: #b5b5b5; }

.stats { display: grid; grid-template-columns: 137fr repeat(7, 133fr) 138fr; margin-top: 17px; height: 83px; background: #fff; border: 1px solid #ededed; border-radius: 4px; }
.stats button { display: flex; gap: 8px; align-items: flex-start; padding: 20px 0 0 12px; text-align: left; border-right: 2px solid #f4f4f4; min-width: 0; }
.stats button:first-child { padding-left: 16px; }
.stats button:last-child { border-right: 0; }
.stats .active { box-shadow: inset 0 -3px #2464c2, 0 1px #2464c2; }
.disc { width: 40px; height: 40px; border-radius: 50%; background: #e7eef9; display: grid; place-items: center; flex: none; }
.fig { display: flex; flex-direction: column; }
.fig em { font-style: normal; font-size: 10px; line-height: 16px; font-weight: 700; letter-spacing: 1px; text-transform: uppercase; color: #757575; }
.fig strong { font-size: 20px; line-height: 24px; font-weight: 300; color: #111; }

.shipments { margin-top: 15px; background: #fff; border: 1px solid #ededed; border-radius: 4px; }
.bar-head { display: flex; align-items: center; gap: 14px; height: 52px; padding: 0 18px 0 19px; border-bottom: 2px solid #f4f4f4; }
.bar-head h2 { flex: 1; }
.grid { height: 493px; border-bottom: 2px solid #f0f0f0; }
th { height: 32px; padding: 2px 0 0 19px; text-align: left; font-size: 9px; font-weight: 700; letter-spacing: 1px; text-transform: uppercase; color: #757575; border-bottom: 2px solid #f4f4f4; }
.grid td:first-child, .grid th:first-child { padding-left: 24px; }
.grid tr:nth-child(odd) td { border-bottom-width: 2px; }
.grid tr:nth-child(even) td { padding-bottom: 1px; }
.grid td:last-child { padding-left: 49px; }
.vessel { margin-left: 2px; }
.grid th:last-child { padding-left: 35px; }
.c1 { width: 135px; } .c2 { width: 137px; } .c3 { width: 171px; } .c4 { width: 190px; }
.c5 { width: 150px; } .c6 { width: 166px; } .c7 { width: 139px; }
.state::before { content: ""; display: inline-block; width: 5px; height: 5px; margin-right: 5px; border-radius: 50%; background: #00897b; vertical-align: 1px; }
.state.transit::before { background: #ffc400; }
.grid .thumb { top: 60px; right: 3px; height: 144px; background: #8f8f8f; }
.pager { display: flex; justify-content: center; gap: 3px; padding: 12px 0 19px; }
.pager button { width: 24px; height: 24px; border-radius: 50%; border: 1px solid #ededed; font-size: 9px; display: grid; place-items: center; color: #111; }
.pager .on { background: #2464c2; border-color: #2464c2; color: #fff; box-shadow: 0 2px 4px rgba(0, 0, 0, .25); }
</style>
